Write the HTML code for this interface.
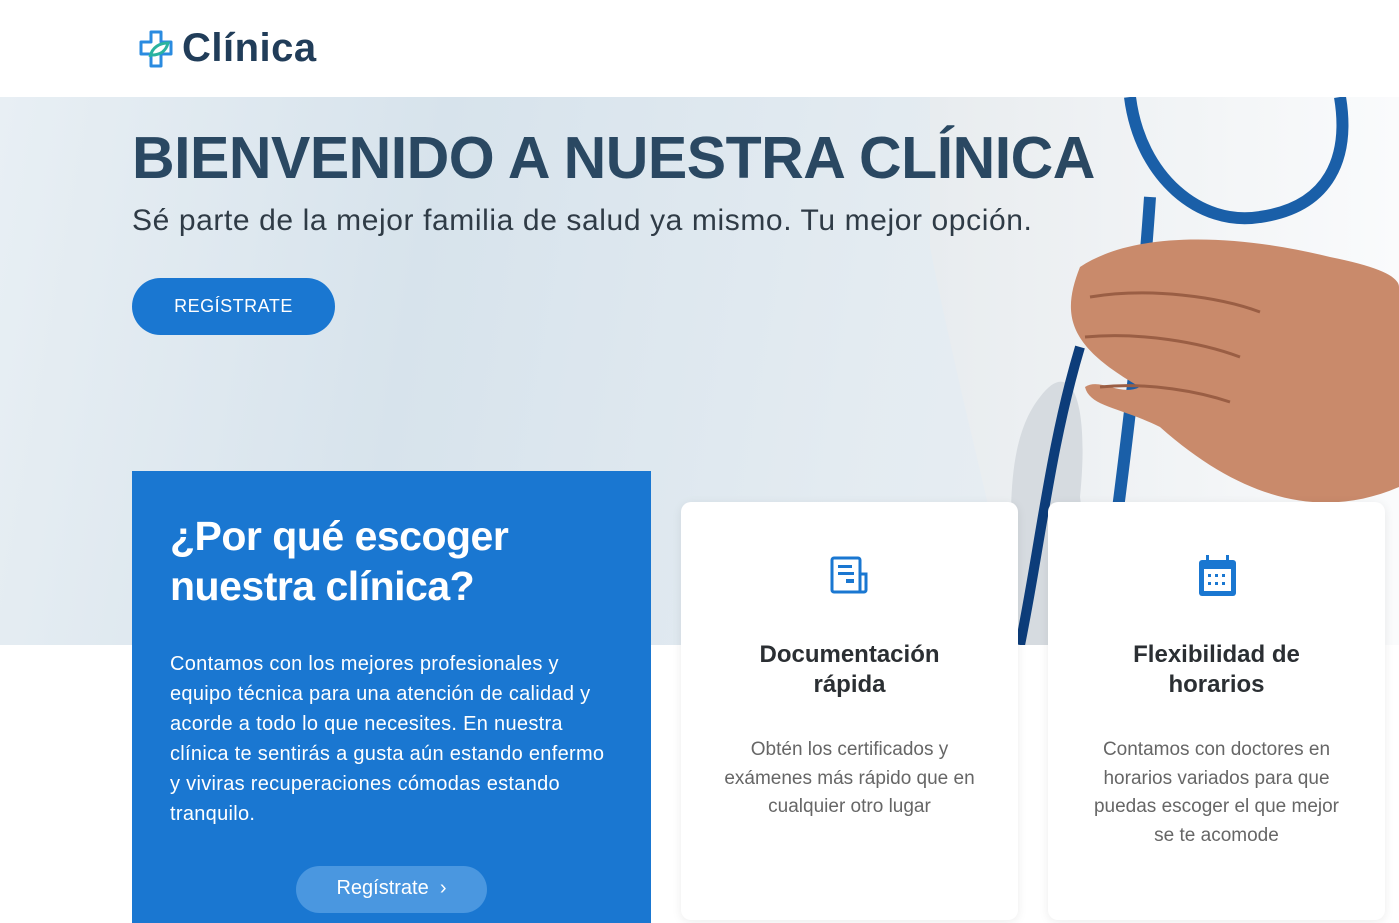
<!DOCTYPE html>
<html><head><meta charset="utf-8"><style>
*{margin:0;padding:0;box-sizing:border-box}
html,body{width:1399px;height:923px;overflow:hidden}
body{background:#fff;font-family:"Liberation Sans",sans-serif;position:relative}
.nav{position:absolute;top:0;left:0;width:1399px;height:97px;background:#fff;z-index:3}
.logo{position:absolute;left:138px;top:26px;display:flex;align-items:center}
.logo span{font-size:40px;font-weight:bold;color:#213d59;margin-left:6px;letter-spacing:0.5px}
.hero{position:absolute;top:97px;left:0;width:1399px;height:548px;background:linear-gradient(100deg,#e8eff4 0%,#d7e3ec 30%,#e3ebf1 60%,#eef2f5 100%);overflow:hidden}
h1{position:absolute;left:132px;top:124px;font-size:59px;color:#2a4862;font-weight:bold;letter-spacing:-0.5px;z-index:2}
.sub{position:absolute;left:132px;top:204px;font-size:30px;color:#2f3b46;z-index:2;letter-spacing:0.6px}
.btn{position:absolute;left:132px;top:278px;width:203px;height:57px;border-radius:29px;background:#1a77d1;color:#fff;font-size:18px;text-align:center;line-height:57px;letter-spacing:0.5px;z-index:2}
.blue{position:absolute;left:132px;top:471px;width:519px;height:452px;background:#1a77d1;color:#fff;z-index:2}
.blue h2{position:absolute;left:38px;top:40px;font-size:41px;line-height:50px;font-weight:bold;letter-spacing:-0.5px}
.blue p{position:absolute;left:38px;top:178px;width:448px;font-size:20px;line-height:30px;letter-spacing:0.3px}
.blue .b2{position:absolute;left:164px;top:395px;width:191px;height:47px;border-radius:24px;background:#4a97e0;font-size:20px;text-align:center;line-height:45px}
.card{position:absolute;top:502px;width:337px;height:418px;background:#fff;border-radius:10px;box-shadow:0 2px 10px rgba(0,0,0,0.08);text-align:center;z-index:2}
.card h3{position:absolute;top:138px;width:100%;font-size:24px;line-height:30px;color:#2b2f33;font-weight:bold}
.card p{position:absolute;top:234px;left:34px;width:269px;font-size:19px;line-height:28.5px;color:#666}
.card svg{position:absolute;left:147px;top:52px}
</style></head><body>
<div class="nav"><div class="logo">
<svg width="38" height="40" viewBox="0 0 38 40"><path d="M13 3h10v10h10v12H23v12H13V25H3V13h10z" fill="none" stroke="#2a8be0" stroke-width="3" stroke-linejoin="round"/><path d="M12 28c2-10 10-14 18-14-2 8-8 12-16 12" fill="none" stroke="#2ab3a0" stroke-width="3"/></svg>
<span>Clínica</span></div></div>
<div class="hero">
<svg width="1399" height="548" style="position:absolute;left:0;top:0">
<defs><linearGradient id="c" x1="0" x2="1"><stop offset="0" stop-color="#e8ecef"/><stop offset="1" stop-color="#fafbfc"/></linearGradient></defs>
<path d="M930 0H1399V548H1020C1000 450 960 300 930 150Z" fill="url(#c)"/>
<path d="M1020 548C1010 450 1000 350 1040 300 1070 260 1090 300 1080 400L1100 548Z" fill="#d6dbe0"/>
<path d="M1130 0C1140 80 1200 130 1260 120 1330 110 1350 60 1340 0" fill="none" stroke="#1a5fa8" stroke-width="12"/>
<path d="M1150 100C1140 250 1120 400 1100 548" fill="none" stroke="#1a5fa8" stroke-width="12"/>
<path d="M1020 548C1040 450 1050 350 1080 250" fill="none" stroke="#0d3d7a" stroke-width="10"/>
<path d="M1080 170C1140 130 1250 140 1330 160 1380 170 1399 180 1399 190V390C1330 420 1250 410 1160 330 1120 310 1090 310 1085 290 1100 280 1120 300 1140 290 1070 250 1060 220 1080 170Z" fill="#c98a6b"/>
<path d="M1090 200C1150 190 1220 200 1260 215M1085 240C1140 235 1200 245 1240 260M1100 290C1150 285 1200 295 1230 305" fill="none" stroke="#9a5e44" stroke-width="3"/>
</svg>
</div>
<h1>BIENVENIDO A NUESTRA CLÍNICA</h1>
<div class="sub">Sé parte de la mejor familia de salud ya mismo. Tu mejor opción.</div>
<div class="btn">REGÍSTRATE</div>
<div class="blue"><h2>¿Por qué escoger<br>nuestra clínica?</h2>
<p>Contamos con los mejores profesionales y equipo técnica para una atención de calidad y acorde a todo lo que necesites. En nuestra clínica te sentirás a gusta aún estando enfermo y viviras recuperaciones cómodas estando tranquilo.</p>
<div class="b2">Regístrate &nbsp;›</div></div>
<div class="card" style="left:681px">
<svg width="44" height="44" viewBox="0 0 44 44"><path d="M4 6a2 2 0 0 1 2-2h24a2 2 0 0 1 2 2v32H6a2 2 0 0 1-2-2zM32 20h6v16a2 2 0 0 1-2 2h-4" fill="none" stroke="#1a77d1" stroke-width="3"/><rect x="10" y="11" width="14" height="3" fill="#1a77d1"/><rect x="10" y="18" width="16" height="3" fill="#1a77d1"/><rect x="18" y="25" width="8" height="4" fill="#1a77d1"/></svg>
<h3>Documentación<br>rápida</h3><p>Obtén los certificados y exámenes más rápido que en cualquier otro lugar</p></div>
<div class="card" style="left:1048px">
<svg width="44" height="44" viewBox="0 0 44 44"><rect x="4" y="6" width="37" height="36" rx="3" fill="#1a77d1"/><rect x="9" y="15" width="27" height="22" fill="#fff"/><rect x="11" y="1" width="3" height="8" fill="#1a77d1"/><rect x="31" y="1" width="3" height="8" fill="#1a77d1"/><g fill="#1a77d1"><rect x="13" y="20" width="3" height="3"/><rect x="20" y="20" width="3" height="3"/><rect x="27" y="20" width="3" height="3"/><rect x="13" y="28" width="3" height="3"/><rect x="20" y="28" width="3" height="3"/><rect x="27" y="28" width="3" height="3"/></g></svg>
<h3>Flexibilidad de<br>horarios</h3><p>Contamos con doctores en horarios variados para que puedas escoger el que mejor se te acomode</p></div>
</body></html>
